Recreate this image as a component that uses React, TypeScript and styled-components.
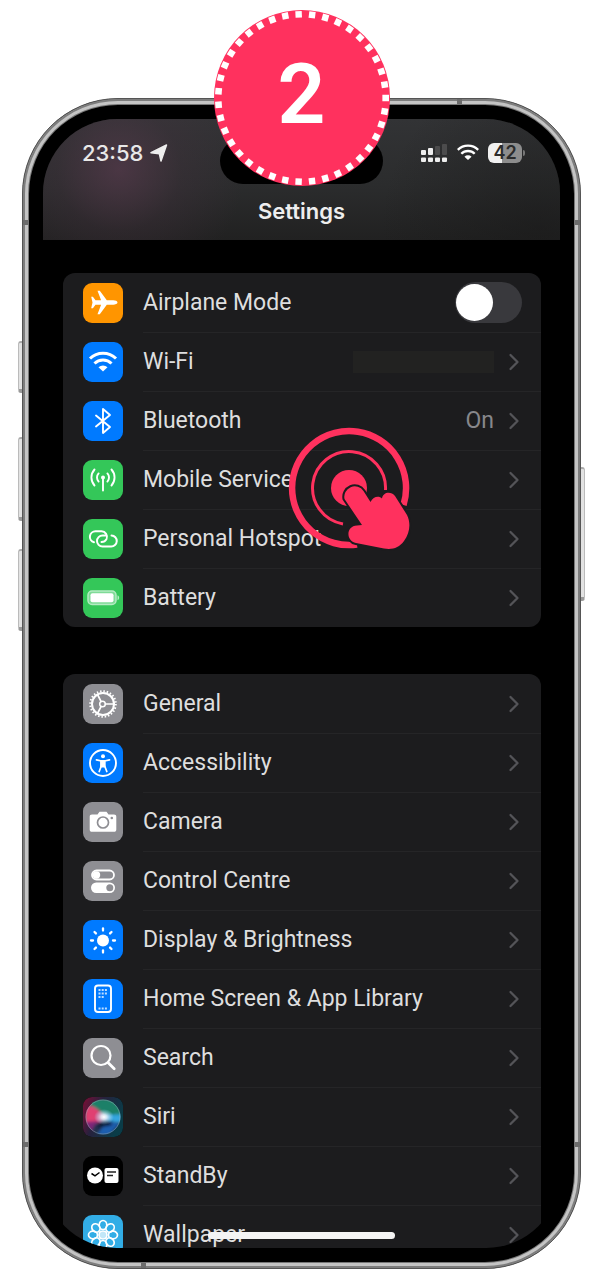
import React from 'react';
import styled, { createGlobalStyle } from 'styled-components';

const Global = createGlobalStyle`
  *, *::before, *::after { box-sizing: border-box; }
  body { margin: 0; background: #fff; font-family: Inter, "Liberation Sans", sans-serif; }
`;

const Page = styled.main`
  padding: 98px 15px 11px 22px;
`;

const Phone = styled.div`
  position: relative;
  padding: 20px;
  background: #000;
  border: 1px solid #555;
  border-radius: 96px;
  box-shadow: inset 0 0 0 2px #7d7d7d, inset 0 0 0 5px #c4c4c4, inset 0 0 0 6px #777;
`;

const SideButton = styled.span<{ $side: 'left' | 'right'; $top: number; $height: number }>`
  position: absolute;
  top: ${p => p.$top}px;
  ${p => p.$side}: -5px;
  width: 4px;
  height: ${p => p.$height}px;
  background: #e2e2e2;
  border-top: 2px solid #aaa;
  border-bottom: 4px solid #999;
  border-${p => p.$side}: 1px solid #bbb;
  border-radius: ${p => (p.$side === 'left' ? '3px 0 0 3px' : '0 3px 3px 0')};
`;

const Antenna = styled.span<{ $edge: 'left' | 'right'; $from: 'top' | 'bottom' }>`
  position: absolute;
  ${p => p.$edge}: 0;
  ${p => p.$from}: 121px;
  width: 5px;
  height: 5px;
  background: #6c6c6c;
`;

const RimMark = styled(Antenna)`
  ${p => p.$edge}: 118px;
  ${p => p.$from}: 0;
`;

const Screen = styled.div`
  position: relative;
  overflow: hidden;
  border-radius: 74px;
  background: #000;
`;

const Header = styled.header`
  padding: 19px 35px 2px;
  background:
    radial-gradient(circle at 76px 50px, rgba(86, 58, 76, 0.72), rgba(70, 50, 64, 0.3) 62px, transparent 125px),
    radial-gradient(circle at 96% 90%, rgba(24, 24, 24, 0.5), transparent 160px),
    linear-gradient(#323335, #2b2c2d 55%, #212121);
`;

const StatusBar = styled.div`
  display: grid;
  grid-template-columns: 1fr 163px 1fr;
  align-items: start;
`;

const StatusSide = styled.div<{ $end?: boolean }>`
  display: flex;
  align-items: center;
  justify-content: ${p => (p.$end ? 'flex-end' : 'flex-start')};
  gap: ${p => (p.$end ? 9 : 7)}px;
  height: 30px;
  padding-left: ${p => (p.$end ? 0 : 4)}px;
`;

const Time = styled.time`
  color: #e8e8e8;
  font-size: 22px;
  font-weight: 500;
  line-height: 30px;
`;

const Island = styled.div`
  height: 46px;
  border-radius: 23px;
  background: #000;
`;

const Title = styled.h1`
  margin: 0;
  color: #eee;
  font-size: 22px;
  font-weight: 600;
  line-height: 54px;
  text-align: center;
`;

const Lists = styled.div`
  display: flex;
  flex-direction: column;
  gap: 47px;
  margin-bottom: -16px;
  padding: 33px 19px 0 20px;
`;

const Group = styled.ul`
  margin: 0;
  padding: 0;
  list-style: none;
  border-radius: 12px;
  background: #1c1c1e;
`;

const Item = styled.li`
  & + & > * > :last-child { border-top: 1px solid #252527; }
`;

const Row = styled.a`
  display: flex;
  align-items: center;
  gap: 20px;
  padding-left: 20px;
  color: inherit;
  text-decoration: none;
`;

const Tile = styled.svg`
  flex: none;
  width: 40px;
  height: 40px;
`;

const RowBody = styled.span`
  display: flex;
  flex: 1;
  align-items: center;
  gap: 14px;
  height: 59px;
  padding-right: 19px;
  font-family: Roboto, "Liberation Sans", sans-serif;
  font-size: 23px;
  line-height: 30px;
`;

const Label = styled.span`
  flex: 1;
  color: #dedede;
  white-space: nowrap;
`;

const Value = styled.span`
  color: #87878b;
`;

const HiddenName = styled.span`
  width: 141px;
  height: 22px;
  background: #222221;
`;

const Chevron = styled.svg`
  width: 14px;
  height: 20px;
`;

const Switch = styled.input`
  display: flex;
  align-items: center;
  appearance: none;
  width: 67px;
  height: 41px;
  margin: 0;
  padding: 1px;
  border-radius: 21px;
  background: #39393d;
  &::before {
    content: '';
    width: 37px;
    height: 37px;
    border-radius: 50%;
    background: #fff;
  }
`;

const HomeBar = styled.div`
  position: absolute;
  bottom: 9px;
  left: 50%;
  width: 187px;
  height: 7px;
  margin-left: -94px;
  border-radius: 4px;
  background: #f4f4f4;
`;

const Badge = styled.div`
  position: absolute;
  top: -89px;
  left: 50%;
  display: grid;
  place-items: center;
  width: 176px;
  height: 176px;
  margin-left: -88px;
  border-radius: 50%;
  background: #ff315e;
  > * { grid-area: 1 / 1; }
`;

const StepNumber = styled.span`
  padding-bottom: 6px;
  color: #fff;
  font-family: Roboto, sans-serif;
  font-size: 84px;
  font-weight: 600;
  line-height: 84px;
`;

const Tap = styled.svg`
  position: absolute;
  top: 326px;
  left: 50%;
  width: 126px;
  height: 126px;
  margin-left: -16px;
`;

const stroke = { fill: 'none', stroke: '#fff', strokeLinecap: 'round', strokeLinejoin: 'round' } as const;

const colors = { orange: '#ff9500', blue: '#007aff', green: '#34c759', grey: '#8e8e93', black: '#000', sky: '#32ade6' };

function WifiShape() {
  return (
    <g {...stroke} strokeLinecap="butt" strokeWidth="3">
      <path d="M7 16.500a18.500 18.500 0 0 1 26 0" />
      <path d="M11.500 21.500a12 12 0 0 1 17 0" />
      <path d="M15.500 25.200a6.500 6.500 0 0 1 9 0L20 29.500z" fill="#fff" stroke="none" />
    </g>
  );
}

const range = (n: number) => Array.from({ length: n }, (_, i) => i);

const glyphs: Record<string, React.ReactNode> = {
  airplane: (
    <path fill="#fff" d="M34.500 19.500c0-1.300-2.200-2.200-4.200-2.200h-6.500L16.800 7.800h-2.300l3.600 9.500h-5.600l-2.600-3.500H8.200l1.300 5.700-1.300 5.700h1.700l2.600-3.500h5.600l-3.600 9.500h2.300l7-9.500h6.500c2 0 4.200-.9 4.200-2.200z" />
  ),
  wifi: <WifiShape />,
  bluetooth: <path {...stroke} strokeWidth="1.900" d="M13 14.500 27 26l-7 6V8l7 6-14 11.500" />,
  mobile: (
    <g {...stroke} strokeWidth="1.900">
      <circle cx="20" cy="17.500" r="2" fill="#fff" stroke="none" />
      <path d="M20 18v12.500M15.600 21.600a6 6 0 0 1 0-8.200M24.400 21.600a6 6 0 0 0 0-8.200M11.500 25.500a12 12 0 0 1 0-16M28.500 25.500a12 12 0 0 0 0-16" />
    </g>
  ),
  hotspot: (
    <g {...stroke} strokeWidth="2">
      <path d="M11 23.300a5.600 5.600 0 0 1 1.500-11h6a5.600 5.600 0 0 1 5 7.800a5.600 5.600 0 0 1-5 3" />
      <path d="M28.500 16.500a5.500 5.500 0 0 1-.5 11h-8.500a5.500 5.500 0 0 1 0-11h3" />
    </g>
  ),
  battery: (
    <g>
      <rect x="5" y="13" width="28" height="13.500" rx="4" fill="#7fdb97" stroke="#b5ebc3" strokeWidth="1.500" />
      <rect x="7.500" y="15.300" width="23" height="9" rx="2" fill="#fff" />
      <path d="M34.500 17.200c2.200.8 2.200 4.200 0 5z" fill="#b5ebc3" />
    </g>
  ),
  general: (
    <g {...stroke}>
      <circle cx="20" cy="20" r="12.800" strokeWidth="2" strokeDasharray="1.500 1.850" strokeLinecap="butt" />
      <circle cx="20" cy="20" r="11" strokeWidth="2" />
      <circle cx="19.500" cy="20" r="2.800" strokeWidth="1.500" />
      <path strokeWidth="1.700" d="M22.500 20h8.500M18 17.400 14.500 10.500M18 22.600l-3.500 6.900" />
    </g>
  ),
  accessibility: (
    <g {...stroke}>
      <circle cx="20" cy="20" r="13" strokeWidth="1.900" />
      <circle cx="20" cy="13.300" r="2" fill="#fff" stroke="none" />
      <path strokeWidth="1.700" d="M13.500 16.800 18.500 18v4.500l-2.300 6M26.500 16.800 21.500 18v4.500l2.300 6" />
      <path fill="#fff" d="M18 17.500h4v6.500h-4z" />
    </g>
  ),
  camera: (
    <g>
      <path fill="#fff" d="M9 12.500h5.500l2-2.700h7l2 2.700H31c1.500 0 2.300.8 2.300 2.300v12.700c0 1.500-.8 2.300-2.300 2.300H9c-1.500 0-2.300-.8-2.300-2.300V14.800c0-1.500.8-2.300 2.300-2.300z" />
      <circle cx="20" cy="20.500" r="5.500" fill="none" stroke="#8e8e93" strokeWidth="1.700" />
      <circle cx="28.800" cy="16" r="1.300" fill="#8e8e93" />
    </g>
  ),
  control: (
    <g>
      <rect x="9" y="9.500" width="22" height="9" rx="4.500" fill="none" stroke="#fff" strokeWidth="1.800" />
      <circle cx="13.500" cy="14" r="3.700" fill="#fff" />
      <rect x="8" y="21.500" width="24" height="10.500" rx="5.200" fill="#fff" />
      <circle cx="26.800" cy="26.700" r="3.500" fill="#8e8e93" />
    </g>
  ),
  display: (
    <g {...stroke} strokeWidth="2.300">
      <circle cx="20" cy="20.500" r="6" fill="#fff" stroke="none" />
      {range(8).map(i => (
        <path key={i} d="M20 10.500v-2" transform={`rotate(${i * 45} 20 20.500)`} />
      ))}
    </g>
  ),
  home: (
    <g {...stroke}>
      <rect x="12" y="6.500" width="16" height="26.500" rx="3" strokeWidth="1.900" />
      <path strokeWidth="1.800" strokeLinecap="butt" strokeDasharray="2 1.200" d="M15.500 11h9.500M15.500 14.500h9.500M15.500 18h6M15.500 29.500h9.500" opacity="0.750" />
    </g>
  ),
  search: (
    <g {...stroke} strokeWidth="2.200">
      <circle cx="18" cy="17.500" r="9.500" />
      <path strokeWidth="2.800" d="m25.200 24.700 6 6" />
    </g>
  ),
  siri: (
    <g>
      <defs>
        <linearGradient id="siriBack" x1="0" y1="0" x2="1" y2="0.400">
          <stop offset="0" stopColor="#7c0e35" />
          <stop offset="0.450" stopColor="#27213d" />
          <stop offset="1" stopColor="#0a3c48" />
        </linearGradient>
        <radialGradient id="siriGlow">
          <stop offset="0" stopColor="#fff" />
          <stop offset="0.300" stopColor="#e9f4ff" stopOpacity="0.850" />
          <stop offset="1" stopColor="#9ddcff" stopOpacity="0" />
        </radialGradient>
        <clipPath id="siriOrb"><circle cx="20" cy="20" r="17.500" /></clipPath>
        <filter id="siriSoft"><feGaussianBlur stdDeviation="1.500" /></filter>
      </defs>
      <rect width="40" height="40" rx="9" fill="url(#siriBack)" />
      <g clipPath="url(#siriOrb)">
        <g filter="url(#siriSoft)">
          <circle cx="20" cy="20" r="18" fill="#233050" />
          <path d="M4 2h36v16L20 19 8 10z" fill="#1f8068" />
          <path d="M2 8c8 0 15 5 19 12-5 7-12 9-19 6z" fill="#e03f72" />
          <path d="M20 20c6-3 14-2 20-3v8c-8 1-14-1-20-5z" fill="#35a6e0" />
          <path d="M24 24c5 1 9 2 13 2L26 38H14z" fill="#1f5fb0" />
          <path d="M18 23c8 0 9 3 12 5l-16 3z" fill="#101a38" />
          <path d="M16 24C12 27 10 30 8 36L2 25z" fill="#7c2878" />
        </g>
        <ellipse cx="21" cy="20" rx="10" ry="8" fill="url(#siriGlow)" />
      </g>
      <circle cx="20" cy="20" r="17" fill="none" stroke="#9fb7c4" strokeOpacity="0.450" />
    </g>
  ),
  standby: (
    <g>
      <circle cx="12" cy="19.500" r="8" fill="#fff" />
      <path d="m8.500 17.500 3.500 2.300 4.500-3.300" fill="none" stroke="#000" strokeWidth="1.500" />
      <rect x="21.500" y="12" width="14" height="15" rx="2" fill="#fff" />
      <path d="M24 16h9M24 19.500h6" stroke="#222" strokeWidth="1.400" />
    </g>
  ),
  wallpaper: (
    <g fill="none" stroke="#fff" strokeWidth="1.700">
      {range(8).map(i => (
        <ellipse key={i} cx="20" cy="10" rx="3.800" ry="4.500" transform={`rotate(${i * 45} 20 20)`} />
      ))}
      <circle cx="20" cy="20" r="4" fill="#fff" fillOpacity="0.700" />
    </g>
  ),
};

type Entry = { icon: string; color: keyof typeof colors; text: string; value?: string; kind?: 'switch' | 'hidden' };

const groups: Entry[][] = [
  [
    { icon: 'airplane', color: 'orange', text: 'Airplane Mode', kind: 'switch' },
    { icon: 'wifi', color: 'blue', text: 'Wi-Fi', kind: 'hidden' },
    { icon: 'bluetooth', color: 'blue', text: 'Bluetooth', value: 'On' },
    { icon: 'mobile', color: 'green', text: 'Mobile Service' },
    { icon: 'hotspot', color: 'green', text: 'Personal Hotspot' },
    { icon: 'battery', color: 'green', text: 'Battery' },
  ],
  [
    { icon: 'general', color: 'grey', text: 'General' },
    { icon: 'accessibility', color: 'blue', text: 'Accessibility' },
    { icon: 'camera', color: 'grey', text: 'Camera' },
    { icon: 'control', color: 'grey', text: 'Control Centre' },
    { icon: 'display', color: 'blue', text: 'Display & Brightness' },
    { icon: 'home', color: 'blue', text: 'Home Screen & App Library' },
    { icon: 'search', color: 'grey', text: 'Search' },
    { icon: 'siri', color: 'black', text: 'Siri' },
    { icon: 'standby', color: 'black', text: 'StandBy' },
    { icon: 'wallpaper', color: 'sky', text: 'Wallpaper' },
  ],
];

function SettingsItem({ icon, color, text, value, kind }: Entry) {
  const isSwitch = kind === 'switch';
  return (
    <Item>
      <Row as={isSwitch ? 'label' : 'a'} {...(isSwitch ? {} : { href: `#${icon}` })}>
        <Tile viewBox="0 0 40 40" aria-hidden="true">
          <rect width="40" height="40" rx="9" fill={colors[color]} />
          {glyphs[icon]}
        </Tile>
        <RowBody>
          <Label>{text}</Label>
          {kind === 'hidden' && <HiddenName />}
          {value && <Value>{value}</Value>}
          {isSwitch ? (
            <Switch type="checkbox" role="switch" />
          ) : (
            <Chevron viewBox="0 0 14 20" aria-hidden="true">
              <path d="m2.500 3 7 7-7 7" fill="none" stroke="#545458" strokeWidth="2.300" strokeLinecap="round" strokeLinejoin="round" />
            </Chevron>
          )}
        </RowBody>
      </Row>
    </Item>
  );
}

function StatusIcons() {
  return (
    <>
      <svg width="28" height="20" viewBox="0 0 28 20" aria-label="Signal">
        <g fill="#eee">
          {range(4).map(i => <rect key={i} x={1 + i * 7} y="14.500" width="5" height="4.500" rx="1" />)}
          <rect x="1" y="7" width="5" height="5" rx="1" />
          <rect x="8" y="5" width="5" height="7" rx="1" />
        </g>
        <g fill="#4c4c4d">
          <rect x="15" y="3" width="5" height="9" rx="1" />
          <rect x="22" y="1" width="5" height="11" rx="1" />
        </g>
      </svg>
      <svg width="22" height="18" viewBox="6 10 28 21" aria-label="Wi-Fi"><WifiShape /></svg>
      <BatteryLevel />
    </>
  );
}

const BatteryBox = styled.span`
  display: flex;
  align-items: center;
  gap: 1px;
  &::after {
    content: '';
    width: 2px;
    height: 6px;
    border-radius: 0 2px 2px 0;
    background: #777;
  }
`;

const BatteryFill = styled.span`
  width: 34px;
  height: 20px;
  border-radius: 6px;
  background: linear-gradient(90deg, #f0f0f0 42%, #8d8d8d 42%);
  color: #2b2b2b;
  font-size: 18px;
  font-weight: 600;
  line-height: 20px;
  text-align: center;
`;

function BatteryLevel() {
  return <BatteryBox><BatteryFill>42</BatteryFill></BatteryBox>;
}

export default function App() {
  return (
    <Page>
      <Global />
      <Phone>
        <SideButton $side="left" $top={242} $height={52} />
        <SideButton $side="left" $top={338} $height={84} />
        <SideButton $side="left" $top={450} $height={82} />
        <SideButton $side="right" $top={368} $height={134} />
        <Antenna $edge="left" $from="top" />
        <Antenna $edge="right" $from="top" />
        <Antenna $edge="left" $from="bottom" />
        <Antenna $edge="right" $from="bottom" />
        <RimMark $edge="right" $from="top" />
        <RimMark $edge="left" $from="bottom" />
        <Screen>
          <Header>
            <StatusBar>
              <StatusSide>
                <Time>23:58</Time>
                <svg width="18" height="18" viewBox="0 0 18 18" aria-hidden="true">
                  <path d="M16.500 1 11 17 9.300 9.700 1 8.700z" fill="#eee" stroke="#eee" strokeWidth="1.500" strokeLinejoin="round" />
                </svg>
              </StatusSide>
              <Island />
              <StatusSide $end><StatusIcons /></StatusSide>
            </StatusBar>
            <Title>Settings</Title>
          </Header>
          <Lists>
            {groups.map((entries, i) => (
              <Group key={i}>
                {entries.map(entry => <SettingsItem key={entry.icon} {...entry} />)}
              </Group>
            ))}
          </Lists>
          <HomeBar />
        </Screen>
        <Tap viewBox="286 425 126 126" aria-hidden="true">
          <g fill="none" stroke="#ff315e">
            <path strokeWidth="6.500" d="M403.500 505A57 57 0 1 0 357 544.500" />
            <path strokeWidth="3" d="M385.500 490A36.500 36.500 0 1 0 343 524" />
          </g>
          <circle cx="349" cy="488" r="18" fill="#ff315e" />
          <path
            d="M362 525 344.500 499A10.500 10.500 0 0 1 363.500 491L370.500 502C373 496.500 379 495.500 382 498.500 383 492 391 491 395 496L407 515C411 523 410 533 404 541 399 548 392 550 384 548.500L356 543C345.500 541 346 526 357 525.500z"
            fill="#ff315e" stroke="#1c1c1e" strokeWidth="4" paintOrder="stroke" strokeLinejoin="round"
          />
        </Tap>
        <Badge>
          <svg width="176" height="176" viewBox="-88 -88 176 176" aria-hidden="true">
            {range(39).map(i => (
              <rect key={i} x="-3.200" y="-87" width="6.400" height="6.600" fill="#fff" transform={`rotate(${-2.300 + i * 9.231})`} />
            ))}
          </svg>
          <StepNumber>2</StepNumber>
        </Badge>
      </Phone>
    </Page>
  );
}
